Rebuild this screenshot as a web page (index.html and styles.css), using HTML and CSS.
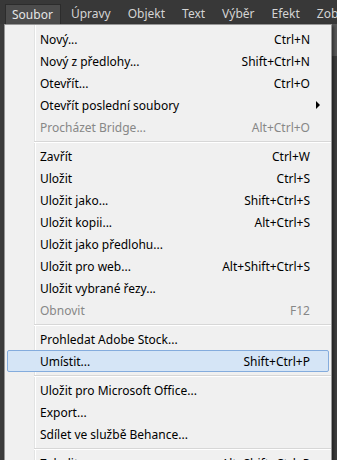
FILE: index.html
```html
<!DOCTYPE html>
<html lang="cs">
<head>
<meta charset="utf-8">
<title>Soubor</title>
<link rel="stylesheet" href="styles.css">
</head>
<body>
<div class="app">
  <nav class="menubar">
    <span class="mb-item active">Soubor</span>
    <span class="mb-item">Úpravy</span>
    <span class="mb-item">Objekt</span>
    <span class="mb-item">Text</span>
    <span class="mb-item">Výběr</span>
    <span class="mb-item">Efekt</span>
    <span class="mb-item">Zobrazení</span>
  </nav>
  <div class="workspace">
    <div class="side-left"></div>
    <div class="canvas-area">
      <div class="panel-strip"></div>
      <div class="panel-body"></div>
    </div>
  </div>

  <div class="menu">
    <div class="row"><span class="label">Nový...</span><span class="key">Ctrl+N</span><span class="sub"></span></div>
    <div class="row"><span class="label">Nový z předlohy...</span><span class="key">Shift+Ctrl+N</span><span class="sub"></span></div>
    <div class="row"><span class="label">Otevřít...</span><span class="key">Ctrl+O</span><span class="sub"></span></div>
    <div class="row"><span class="label">Otevřít poslední soubory</span><span class="key"></span><span class="sub"><i class="arrow"></i></span></div>
    <div class="row disabled"><span class="label">Procházet Bridge...</span><span class="key">Alt+Ctrl+O</span><span class="sub"></span></div>
    <div class="sep"></div>
    <div class="row"><span class="label">Zavřít</span><span class="key">Ctrl+W</span><span class="sub"></span></div>
    <div class="row"><span class="label">Uložit</span><span class="key">Ctrl+S</span><span class="sub"></span></div>
    <div class="row"><span class="label">Uložit jako...</span><span class="key">Shift+Ctrl+S</span><span class="sub"></span></div>
    <div class="row"><span class="label">Uložit kopii...</span><span class="key">Alt+Ctrl+S</span><span class="sub"></span></div>
    <div class="row"><span class="label">Uložit jako předlohu...</span><span class="key"></span><span class="sub"></span></div>
    <div class="row"><span class="label">Uložit pro web...</span><span class="key">Alt+Shift+Ctrl+S</span><span class="sub"></span></div>
    <div class="row"><span class="label">Uložit vybrané řezy...</span><span class="key"></span><span class="sub"></span></div>
    <div class="row disabled"><span class="label">Obnovit</span><span class="key">F12</span><span class="sub"></span></div>
    <div class="sep"></div>
    <div class="row"><span class="label">Prohledat Adobe Stock...</span><span class="key"></span><span class="sub"></span></div>
    <div class="row hover"><span class="label">Umístit...</span><span class="key">Shift+Ctrl+P</span><span class="sub"></span></div>
    <div class="sep"></div>
    <div class="row"><span class="label">Uložit pro Microsoft Office...</span><span class="key"></span><span class="sub"></span></div>
    <div class="row"><span class="label">Export...</span><span class="key"></span><span class="sub"></span></div>
    <div class="row"><span class="label">Sdílet ve službě Behance...</span><span class="key"></span><span class="sub"></span></div>
    <div class="sep"></div>
    <div class="row"><span class="label">Zabalit...</span><span class="key">Alt+Shift+Ctrl+P</span><span class="sub"></span></div>
    <div class="row"><span class="label">Skripty</span><span class="key"></span><span class="sub"><i class="arrow"></i></span></div>
  </div>
</div>
</body>
</html>
```

FILE: styles.css
```css
* { box-sizing: border-box; }
html, body {
  margin: 0;
  padding: 0;
  height: 100%;
  overflow: hidden;
}
body {
  background: #4a4a4a;
  font-family: "Noto Sans", "Open Sans", sans-serif;
  font-size: 12px;
}
.app {
  position: relative;
  height: 460px;
  display: flex;
  flex-direction: column;
}
.menubar {
  height: 24px;
  flex: none;
  background: #383838;
  display: flex;
  align-items: flex-end;
  gap: 3px;
  padding-left: 5px;
  white-space: nowrap;
  overflow: hidden;
}
.mb-item {
  height: 20px;
  line-height: 20px;
  padding: 0 7px;
  color: #d4d4d4;
}
.mb-item.active {
  background: #4c4c4c;
  border: 1px solid #2c2c2c;
  border-bottom: none;
  line-height: 19px;
  padding: 0 7px 0 6px;
  color: #e6e6e6;
}
.workspace {
  flex: 1;
  display: flex;
}
.side-left {
  width: 4px;
  background: #3c3c3c;
}
.canvas-area {
  flex: 1;
  display: flex;
  flex-direction: column;
}
.panel-strip {
  height: 32px;
  background: #5a5a5a;
}
.panel-body {
  flex: 1;
  background: #3e3e3e;
}

/* dropdown menu overlays the app */
.menu {
  position: absolute;
  top: 24px;
  left: 4px;
  width: 328px;
  padding: 3px 0 3px;
  background-color: #f0f0f0;
  background-image: linear-gradient(to right,
      transparent 29px, #e2e3e3 29px, #e2e3e3 30px,
      #ffffff 30px, #ffffff 31px, transparent 31px);
  border: 1px solid #979797;
  box-shadow: 2px 2px 3px rgba(0, 0, 0, 0.45);
  color: #000;
  display: flex;
  flex-direction: column;
}
.row {
  height: 22px;
  margin: 0 2px;
  padding-left: 32px;
  display: flex;
  align-items: center;
  white-space: nowrap;
  border: 1px solid transparent;
  border-radius: 2px;
}
.label { flex: 1; }
.key { text-align: right; }
.sub {
  width: 18px;
  flex: none;
  display: flex;
  align-items: center;
}
.arrow {
  display: block;
  margin-left: 6px;
  width: 0;
  height: 0;
  border-left: 4px solid #000;
  border-top: 4px solid transparent;
  border-bottom: 4px solid transparent;
}
.row.disabled { color: #878787; }
.row.hover {
  background: #d5e5f6;
  border-color: #84acdd;
}
.sep {
  height: 7px;
  margin-left: 29px;
  background: linear-gradient(to bottom,
      transparent 3px, #d7d7d7 3px, #d7d7d7 4px,
      #ffffff 4px, #ffffff 5px, transparent 5px);
}
```
